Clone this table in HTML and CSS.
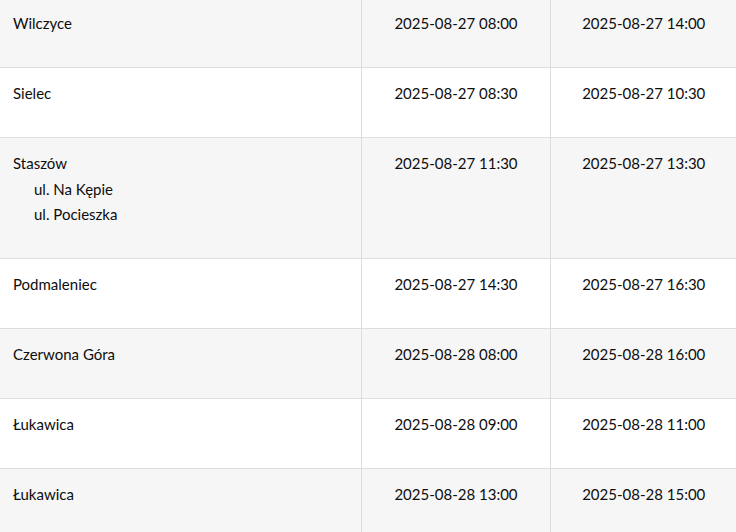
FILE: index.html
```html
<!DOCTYPE html>
<html lang="pl">
<head>
<meta charset="utf-8">
<link rel="stylesheet" href="styles.css">
</head>
<body>
<table class="schedule">
  <colgroup>
    <col class="c-place">
    <col class="c-from">
    <col class="c-to">
  </colgroup>
  <tbody>
    <tr class="alt"><td><div class="place">Wilczyce</div></td><td class="dt">2025-08-27 08:00</td><td class="dt">2025-08-27 14:00</td></tr>
    <tr><td><div class="place">Sielec</div></td><td class="dt">2025-08-27 08:30</td><td class="dt">2025-08-27 10:30</td></tr>
    <tr class="alt"><td><div class="place">Staszów</div><ul class="streets"><li>ul. Na Kępie</li><li>ul. Pocieszka</li></ul></td><td class="dt">2025-08-27 11:30</td><td class="dt">2025-08-27 13:30</td></tr>
    <tr><td><div class="place">Podmaleniec</div></td><td class="dt">2025-08-27 14:30</td><td class="dt">2025-08-27 16:30</td></tr>
    <tr class="alt"><td><div class="place">Czerwona Góra</div></td><td class="dt">2025-08-28 08:00</td><td class="dt">2025-08-28 16:00</td></tr>
    <tr><td><div class="place">Łukawica</div></td><td class="dt">2025-08-28 09:00</td><td class="dt">2025-08-28 11:00</td></tr>
    <tr class="alt"><td><div class="place">Łukawica</div></td><td class="dt">2025-08-28 13:00</td><td class="dt">2025-08-28 15:00</td></tr>
  </tbody>
</table>
</body>
</html>
```
FILE: styles.css
```css
html, body {
  margin: 0;
  padding: 0;
  background: #ffffff;
}
body {
  font-family: "Lato", "Open Sans", sans-serif;
  font-size: 15px;
  line-height: 25.5px;
  color: #0d0d0d;
}
.schedule {
  width: 736px;
  border-collapse: collapse;
  table-layout: fixed;
  margin-top: -2px;
}
.c-place { width: 361px; }
.c-from { width: 189px; }
.c-to { width: 186px; }
.schedule td {
  vertical-align: top;
  padding: 13px 12px 30.5px 13px;
  border-bottom: 1px solid #dddddd;
}
.schedule td + td {
  border-left: 1px solid #dddddd;
}
.schedule tr.alt td {
  background: #f6f6f6;
}
.dt {
  text-align: center;
}
.place {
  margin: 0;
}
.streets {
  list-style: none;
  margin: 0;
  padding: 0 0 0 21px;
}
```
